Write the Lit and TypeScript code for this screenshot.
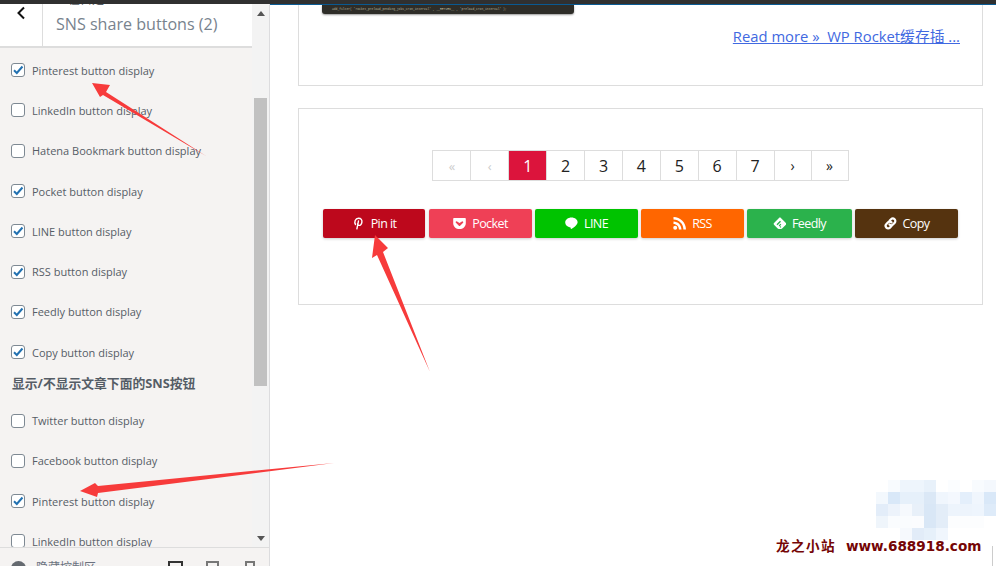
import { LitElement, html, css, svg } from "lit";
import { customElement } from "lit/decorators.js";

const firstRows: [string, boolean][] = [
  ["Pinterest button display", true],
  ["LinkedIn button display", false],
  ["Hatena Bookmark button display", false],
  ["Pocket button display", true],
  ["LINE button display", true],
  ["RSS button display", true],
  ["Feedly button display", true],
  ["Copy button display", true],
];
const secondRows: [string, boolean][] = [
  ["Twitter button display", false],
  ["Facebook button display", false],
  ["Pinterest button display", true],
  ["LinkedIn button display", false],
];
const pages = ["«", "‹", "1", "2", "3", "4", "5", "6", "7", "›", "»"];

const icons: Record<string, unknown> = {
  pin: svg`<path fill="none" stroke="currentColor" stroke-width="1.4" stroke-linecap="round" d="M3.500 7.500C2 5.500 3.200 1.200 6.500 1.200c2.600 0 3.700 1.800 3.400 3.900-.3 2.200-1.700 3.500-3.200 3.200-.9-.2-1.300-.9-1.200-1.600M6.500 3.900 4.900 11.800"/>`,
  pocket: svg`<path fill="currentColor" fill-rule="evenodd" d="M1.200 1h10.600c.6 0 1 .4 1 1v4.200c0 3.400-2.800 5.900-6.300 5.900S.2 9.600.2 6.200V2c0-.6.4-1 1-1zm2.300 3.300a.9.9 0 0 0-.6 1.500l3 2.900c.3.300.9.300 1.200 0l3-2.900a.9.9 0 0 0-1.200-1.300L6.500 5.900 4.100 4.500a.9.9 0 0 0-.6-.2z"/>`,
  line: svg`<path fill="currentColor" d="M6.500.5C3 .5.200 2.700.200 5.500c0 2.500 2.200 4.500 5.200 4.900.5.100.4.500.3 1.200 0 .3.200.5.600.3 1.800-1 5.900-3.500 6.300-6.400C12.800 2.700 10 .5 6.500.5z"/>`,
  rss: svg`<path fill="currentColor" d="M2.200 8.700a2 2 0 1 0 0 4 2 2 0 0 0 0-4zM.5 4.500v2.600c2.900 0 5.400 2.400 5.400 5.400h2.600c0-4.400-3.600-8-8-8zM.5 0v2.600c5.500 0 9.900 4.400 9.900 9.900H13C13 5.600 7.400 0 .5 0z"/>`,
  feedly: svg`<path fill="currentColor" fill-rule="evenodd" d="M6 .9c.5-.5 1.400-.5 1.900 0l5 5c.5.5.5 1.400 0 1.900l-3.800 3.800c-.3.300-.6.400-1 .4H5.700c-.4 0-.7-.1-1-.4L1 7.800c-.5-.5-.5-1.400 0-1.900zM7 3.800 3.500 7.300l1 1L8 4.800zM7.500 6.800 5.700 8.600l.8.800 1.800-1.800zM7.500 9.100l-.8.800.8.800.8-.8z"/>`,
  copy: svg`<g fill="none" stroke="currentColor" stroke-width="2.200" stroke-linecap="round"><path d="M5.700 3.600 7 2.300a2.500 2.500 0 0 1 3.600 3.600L9 7.500a2.500 2.500 0 0 1-3.500 0"/><path d="M7.300 9.300 6 10.600A2.500 2.500 0 0 1 2.400 7L4 5.400a2.500 2.500 0 0 1 3.500 0"/></g>`,
};

const shares = [
  { label: "Pin it", icon: "pin", cls: "pinit" },
  { label: "Pocket", icon: "pocket", cls: "pocket" },
  { label: "LINE", icon: "line", cls: "lineapp" },
  { label: "RSS", icon: "rss", cls: "rss" },
  { label: "Feedly", icon: "feedly", cls: "feedly" },
  { label: "Copy", icon: "copy", cls: "copy" },
];

const wmCells = [
  "#fff","#f8fbfe","#eef5fc","#eef5fc","#e8f1fa","#fff","#fbfdff","#fff","#f8fbfe","#f4f8fd",
  "#f3f8fd","#d9e8f8","#e6f0fa","#e6f0fa","#dbe8f6","#f0f6fd","#f4f8fe","#e4effb","#f0f6fd","#d9e8f8",
  "#e3edf9","#edf3fb","#f6f9fd","#e8f0f9","#d9e7f6","#e3edf8","#edf4fc","#edf4fc","#eef5fd","#deebf9",
  "#eff5fb","#fafcfe","#fafcfe","#fbfcfe","#d9e7f6","#e3edf8","#fcfdfe","#fcfdfe","#fcfdfe","#fff",
  "#fff","#fff","#f6f9fd","#e2ecf8","#e6f0fa","#f0f6fd","#fff","#fff","#fff","#fff",
];

@customElement("app-root")
export class AppRoot extends LitElement {
  static styles = css`
    :host {
      display: block;
      position: relative;
      width: 996px;
      height: 566px;
      overflow: hidden;
      background: #fff;
      font-family: "Open Sans", "Noto Sans CJK SC", sans-serif;
      color: #555d66;
    }
    .topbar { height: 4px; background: #303030; }
    .layout { display: flex; height: 562px; }
    .side {
      width: 270px;
      flex: none;
      display: flex;
      flex-direction: column;
      background: #f5f3f2;
      border-right: 1px solid #dcdcde;
      box-sizing: border-box;
    }
    .upper { flex: 1; min-height: 0; display: flex; }
    .panel { width: 252px; flex: none; display: flex; flex-direction: column; min-height: 0; }
    .head {
      height: 42px;
      flex: none;
      display: flex;
      background: #fff;
      border-bottom: 2px solid #ddd;
    }
    .back {
      width: 43px;
      flex: none;
      border-right: 1px solid #ddd;
      display: flex;
      justify-content: center;
      padding-top: 2px;
      box-sizing: border-box;
    }
    .title {
      padding-left: 13px;
      font-size: 16.1px;
      line-height: 22px;
      padding-top: 9px;
      color: #78838e;
      white-space: nowrap;
      position: relative;
      overflow: hidden;
      flex: 1;
    }
    .crumb {
      position: absolute;
      left: 13px;
      top: -11px;
      font-size: 12px;
      line-height: 14px;
      color: #555d66;
    }
    .list { flex: 1; min-height: 0; overflow: hidden; padding: 2px 0 0 11px; box-sizing: border-box; }
    .row {
      display: flex;
      align-items: center;
      gap: 7px;
      height: 40.3px;
      font-size: 11px;
      white-space: nowrap;
    }
    .box {
      width: 14px;
      height: 14px;
      box-sizing: border-box;
      border: 1px solid #7e8993;
      border-radius: 3px;
      background: #fff;
      flex: none;
      display: flex;
      align-items: center;
      justify-content: center;
    }
    .sec {
      font-weight: 700;
      font-size: 12.800px;
      line-height: 23px;
      height: 28px;
      padding-left: 1px;
      white-space: nowrap;
    }
    .scroll {
      width: 17px;
      flex: none;
      background: #f3f3f3;
      display: flex;
      flex-direction: column;
    }
    .scroll .up, .scroll .down {
      height: 17px;
      flex: none;
      display: flex;
      align-items: center;
      justify-content: center;
    }
    .scroll .up { padding-top: 1px; box-sizing: border-box; }
    .scroll .track { flex: 1; display: flex; flex-direction: column; }
    .scroll .gap { height: 77px; }
    .scroll .thumb { height: 288px; background: #c1c1c1; margin: 0 2px 0 2px; }
    .foot {
      height: 19px;
      flex: none;
      border-top: 1px solid #ddd;
      display: flex;
      align-items: flex-start;
      padding-left: 11px;
      box-sizing: border-box;
      font-size: 12px;
      overflow: hidden;
      color: #6b7280;
    }
    .foot .info { width: 15px; height: 15px; border-radius: 50%; background: #656a70; margin-top: 13px; margin-right: 10px; flex: none; }
    .foot .hide { padding-top: 13px; line-height: 14px; width: 132px; flex: none; }
    .foot .dev { display: flex; padding-top: 13px; }
    .foot .dev i { display: block; height: 14px; box-sizing: border-box; border: 2px solid #777; flex: none; }
    .foot .dev i:nth-child(1) { width: 15px; border-color: #333; }
    .foot .dev i:nth-child(2) { width: 13px; margin-left: 23px; }
    .foot .dev i:nth-child(3) { width: 10px; margin-left: 26px; }

    .main { flex: 1; min-width: 0; border-top: 1px solid #0a5b94; padding: 0 13px 0 28px; }
    .card { border: 1px solid #ddd; box-sizing: border-box; }
    .card.one { height: 81px; border-top: 0; margin-bottom: 22px; display: flex; flex-direction: column; padding: 0 22px 0 23px; }
    .shot { width: 252px; height: 9px; flex: none; background: #2e2d28; border-radius: 0 0 3px 3px; box-shadow: 0 1px 2px #0006; color: #b9b79c; font-family: "Liberation Mono", monospace; font-size: 3px; line-height: 9px; padding-left: 10px; box-sizing: border-box; white-space: nowrap; overflow: hidden; }
    .more { margin-top: 11px; text-align: right; font-size: 14.800px; line-height: 22px; color: #4169e1; white-space: nowrap; }
    .more a { color: #4169e1; text-decoration: underline; }
    .card.two { height: 197px; padding: 41px 24px 0; }
    .pager { display: flex; justify-content: center; }
    .pager span {
      width: 38.900px;
      height: 31px;
      box-sizing: border-box;
      border: 1px solid #ddd;
      margin-left: -1px;
      display: flex;
      align-items: center;
      justify-content: center;
      font-size: 16px;
      color: #222;
      background: #fff;
      flex: none;
    }
    .pager span:first-child { margin-left: 0; }
    .pager span.off { color: #ccc; font-size: 13px; }
    .pager span.on { background: #dc143c; color: #fff; }
    .pager span.sm { font-size: 14px; width: 38px; }
    .shares { display: grid; grid-template-columns: 103px 103px 103px 103px 105px 103px; column-gap: 3px; margin-top: 28px; }
    .share {
      height: 29px;
      box-sizing: border-box;
      padding-bottom: 1px;
      border-radius: 2px;
      box-shadow: 0 1px 3px #0003;
      color: #fff;
      font-size: 12.500px;
      display: flex;
      align-items: center;
      justify-content: center;
      gap: 6px;
      letter-spacing: -0.6px;
    }
    .share svg { width: 13px; height: 13px; flex: none; }
    .pinit { background: #bd081c; margin-right: 1px; }
    .pocket { background: #ef4056; }
    .lineapp { background: #00c300; }
    .rss { background: #f60; }
    .feedly { background: #2bb24c; }
    .copy { background: #55330f; }

    .arrows { position: absolute; left: 0; top: 0; width: 996px; height: 566px; pointer-events: none; }
    .wm { position: absolute; left: 876px; top: 480px; display: grid; grid-template-columns: repeat(10, 12px); grid-auto-rows: 12px; }
    .mark {
      position: absolute;
      left: 776px;
      top: 536px;
      font-family: "DejaVu Sans", "Noto Sans CJK SC", sans-serif;
      font-weight: 700;
      font-size: 13.600px;
      line-height: 20px;
      color: #750505;
      white-space: nowrap;
      display: flex;
      gap: 10px;
    }
    .mark .cn { letter-spacing: 1.400px; }
    .tick { position: absolute; left: 992px; top: 546px; width: 1px; height: 20px; background: #ccc; }
  `;

  private row(r: [string, boolean]) {
    return html`<div class="row">
      <span class="box">${r[1]
        ? html`<svg width="12" height="12" viewBox="0 0 12 12"><path d="M2 6.300 4.800 9 10.500 2.500" fill="none" stroke="#2271b1" stroke-width="2"/></svg>`
        : ""}</span>
      <span>${r[0]}</span>
    </div>`;
  }

  render() {
    return html`
      <div class="topbar"></div>
      <div class="layout">
        <aside class="side">
          <div class="upper">
            <div class="panel">
              <div class="head">
                <div class="back">
                  <svg width="10" height="14" viewBox="0 0 10 14"><path d="M8 1.500 2.500 7 8 12.500" fill="none" stroke="#111" stroke-width="2"/></svg>
                </div>
                <div class="title"><span class="crumb">正在自定义</span>SNS share buttons (2)</div>
              </div>
              <div class="list">
                ${firstRows.map((r) => this.row(r))}
                <div class="sec">显示/不显示文章下面的SNS按钮</div>
                ${secondRows.map((r) => this.row(r))}
              </div>
            </div>
            <div class="scroll">
              <div class="up"><svg width="8" height="5" viewBox="0 0 8 5"><path d="M4 0 8 5H0z" fill="#555"/></svg></div>
              <div class="track"><div class="gap"></div><div class="thumb"></div></div>
              <div class="down"><svg width="8" height="5" viewBox="0 0 8 5"><path d="M0 0h8L4 5z" fill="#555"/></svg></div>
            </div>
          </div>
          <div class="foot">
            <span class="info"></span><span class="hide">隐藏控制区</span>
            <span class="dev"><i></i><i></i><i></i></span>
          </div>
        </aside>
        <main class="main">
          <section class="card one">
            <div class="shot">add_filter( 'rocket_preload_pending_jobs_cron_interval' , __RETURN__ , 'preload_cron_interval' );</div>
            <div class="more"><a href="#">Read more »&nbsp; WP Rocket缓存插 ...</a></div>
          </section>
          <section class="card two">
            <div class="pager">
              ${pages.map((p, i) => html`<span class="${i < 2 ? "off" : p === "1" ? "on" : i > 8 ? "sm" : ""}">${p}</span>`)}
            </div>
            <div class="shares">
              ${shares.map((s) => html`<div class="share ${s.cls}"><svg viewBox="0 0 13 13">${icons[s.icon]}</svg><span>${s.label}</span></div>`)}
            </div>
          </section>
        </main>
      </div>
      <div class="wm">${wmCells.map((c) => html`<i style="background:${c}"></i>`)}</div>
      <div class="tick"></div>
      <div class="mark"><span class="cn">龙之小站</span><span>www.688918.com</span></div>
      <svg class="arrows" viewBox="0 0 996 566">
        <path fill="#f73b3b" d="M92 83 110 85 106 92 206 156 103 95 100 97z"/>
        <path fill="#f73b3b" d="M375 235 388 248 383 252 430 372 377 255 372 258z"/>
        <path fill="#f73b3b" d="M80 491 95 483 98 486 334 463 98 493 97 497z"/>
      </svg>
    `;
  }
}
